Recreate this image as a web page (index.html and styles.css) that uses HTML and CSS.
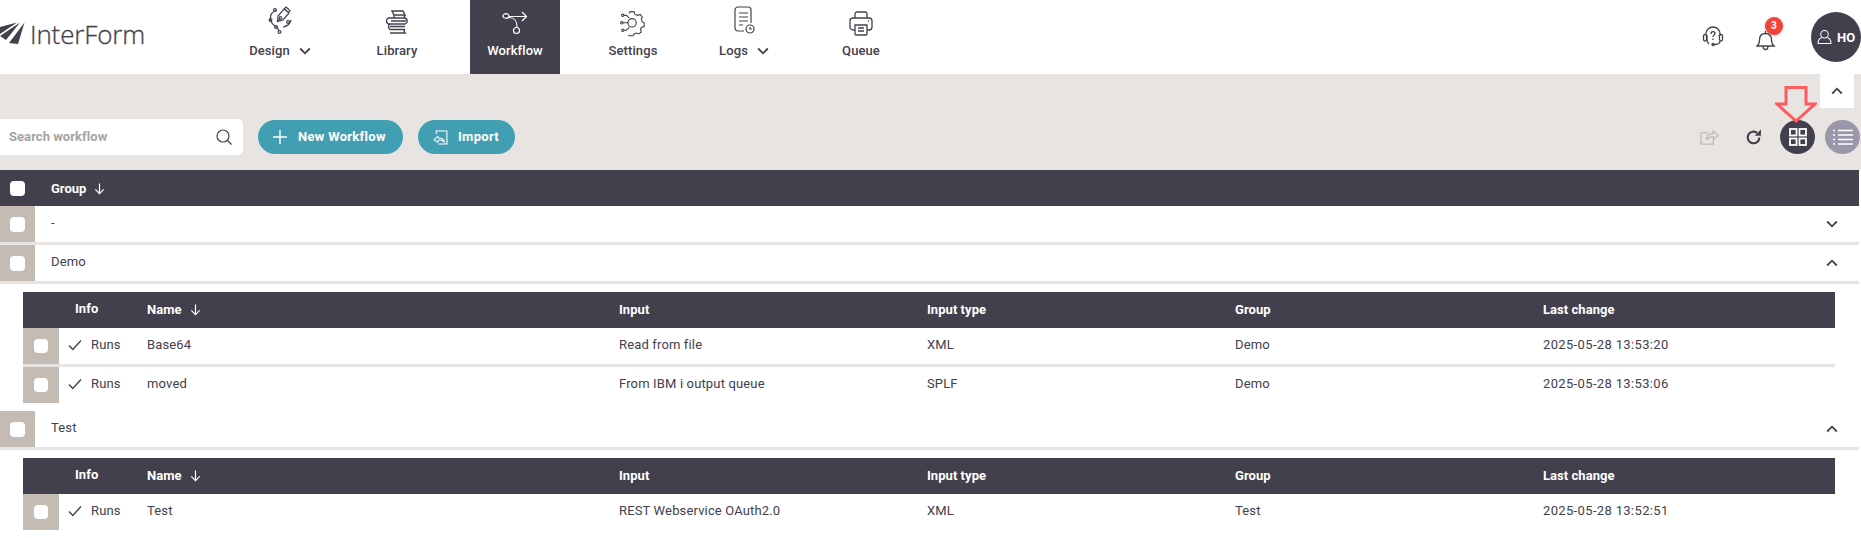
FILE: index.html
```html
<!DOCTYPE html>
<html lang="en">
<head>
<meta charset="utf-8">
<title>InterForm Workflow</title>
<link rel="stylesheet" href="styles.css">
</head>
<body>
<svg class="defs" width="0" height="0" aria-hidden="true">
  <defs>
    <symbol id="sort" viewBox="0 0 14 14"><path d="M7 1.500v11M2.500 8 7 12.500 11.500 8" fill="none" stroke="currentColor" stroke-width="1.300"/></symbol>
    <symbol id="down" viewBox="0 0 12 8"><path d="M1.200 1.500 6 6.300l4.800-4.800" fill="none" stroke="currentColor" stroke-width="1.800"/></symbol>
    <symbol id="up" viewBox="0 0 12 8"><path d="M1.200 6.500 6 1.700l4.800 4.800" fill="none" stroke="currentColor" stroke-width="1.800"/></symbol>
    <symbol id="check" viewBox="0 0 14 12"><path d="M1 6.500 4.800 10.500 13 1.500" fill="none" stroke="currentColor" stroke-width="1.400"/></symbol>
  </defs>
</svg>
<header class="topbar">
  <div class="logo">
    <svg class="logo-mark" viewBox="0 0 25 22"><path d="M0 5 17 .5 0 12zM0 14 20 .5 6 18zM9 21 24.500 .5 18 22z" fill="#43404e"/></svg>
    <span class="logo-text">InterForm</span>
  </div>
  <nav class="nav">
    <a class="nav-item w-design">
      <svg class="nav-icon" viewBox="0 0 26 28" fill="none" stroke="currentColor" stroke-width="1.200"><path d="m17 3 5 4-6 7-5.500 1.500L11 10zM19 1l4 3.500-1.500 2-4-3.500z"/><circle cx="13.500" cy="12" r="1.300"/><path d="M10.500 15.500 13 12.500M9 4.500C5 6 3 9 3.500 13c.3 3 2.500 6 6 7.500M24 14c-1 4-4 6.500-8 7M12 25l-2-4"/><circle cx="8" cy="4" r="1.400"/><circle cx="3.500" cy="14" r="1.400"/><circle cx="9" cy="21" r="1.400"/><circle cx="12.500" cy="26" r="1.400"/><circle cx="21" cy="16" r="1.400"/></svg>
      <span class="nav-label">Design<svg class="chev" viewBox="0 0 12 8"><use href="#down"/></svg></span>
    </a>
    <a class="nav-item w-library">
      <svg class="nav-icon" viewBox="0 -4 26 28" fill="none" stroke="currentColor" stroke-width="1.400"><path d="M8 1h11l2 4H10zM10 5v3h10l1-3M4 8h17c3 1 3 5 0 6H4M4 8C2 9.500 2 12.500 4 14M6 14c-2 1.500-2 4 0 5.500h15M6 16.500h15M21 19.500c-1 .5-1 2.500 0 3.500H6M7 11h15"/></svg>
      <span class="nav-label">Library</span>
    </a>
    <a class="nav-item w-workflow active">
      <svg class="nav-icon" viewBox="0 -4.500 26 28" fill="none" stroke="currentColor" stroke-width="1.200"><ellipse cx="4" cy="5.500" rx="3" ry="2.300"/><path d="M7 6h17M20 1.500 24.500 6 20 10.500M7 7c6 0 8 3 8 10"/><circle cx="14.500" cy="20" r="3"/></svg>
      <span class="nav-label">Workflow</span>
    </a>
    <a class="nav-item w-settings">
      <svg class="nav-icon" viewBox="0 -3 28 28" fill="none" stroke="currentColor" stroke-width="1.200"><circle cx="13" cy="14" r="4.500"/><path d="M4 6h3l3 3M3 14h6M4 22h3l3-3M10 4l1-2h4l1 3 3 1 3-1 2 3-1 2 1 3 2 1v4l-3 1-1 2 1 3-3 2-2-1-3 1-1 2h-4l-1-1"/><circle cx="3" cy="6" r="1.300"/><circle cx="2" cy="14" r="1.300"/><circle cx="3" cy="22" r="1.300"/></svg>
      <span class="nav-label">Settings</span>
    </a>
    <a class="nav-item w-logs">
      <svg class="nav-icon" viewBox="0 0 22 28" fill="none" stroke="currentColor" stroke-width="1.200"><path d="M11 25H5a3 3 0 0 1-3-3V4a3 3 0 0 1 3-3h10a3 3 0 0 1 3 3v13"/><path d="M6 7h9M6 11h9M6 15h9M6 19h4"/><circle cx="17" cy="23" r="4"/><path d="M17 21v2h2"/></svg>
      <span class="nav-label">Logs<svg class="chev" viewBox="0 0 12 8"><use href="#down"/></svg></span>
    </a>
    <a class="nav-item w-queue">
      <svg class="nav-icon" viewBox="0 -4 26 28" fill="none" stroke="currentColor" stroke-width="1.300"><path d="M7 8V4a2 2 0 0 1 2-2h8a2 2 0 0 1 2 2v4M7 20H5a3 3 0 0 1-3-3v-6a3 3 0 0 1 3-3h16a3 3 0 0 1 3 3v6a3 3 0 0 1-3 3h-2"/><path d="M7 15h12v9a1 1 0 0 1-1 1H8a1 1 0 0 1-1-1zM10 18h6M10 21h6M20 11h1"/></svg>
      <span class="nav-label">Queue</span>
    </a>
  </nav>
  <div class="top-actions">
    <svg class="help" viewBox="0 0 22 22" fill="none" stroke="#43404e" stroke-width="1.300"><path d="M4 9V8a7 7 0 0 1 14 0v1M18 15c0 2-2 3.500-6 3.500"/><rect x="1.500" y="8.500" width="3" height="6.500" rx="1.500"/><rect x="17.500" y="8.500" width="3" height="6.500" rx="1.500"/><path d="M5 9v5c0 2 1 3 2 4M17 9v1M9 8c0-3 4-3 4-.5 0 1.500-2 1.500-2 3.500M11 12.500v1.500"/><circle cx="11" cy="18.500" r="1"/></svg>
    <div class="bell-wrap">
      <svg class="bell" viewBox="0 0 20 22" fill="none" stroke="#43404e" stroke-width="1.300"><path d="M1 17h17c-2-1.500-2.500-3-2.500-6 0-4-2-6.500-6-6.500s-6 2.500-6 6.500c0 3-.5 4.500-2.500 6zM7 17.500c0 4 5 4 5 0M9.500 4.500V2"/></svg>
      <span class="badge">3</span>
    </div>
    <div class="avatar">
      <svg class="avatar-icon" viewBox="0 0 16 16" fill="none" stroke="#fff" stroke-width="1.100"><circle cx="8" cy="5" r="4"/><path d="M5 8.500C2.500 9.500 1 12 1 15h14c0-3-1.500-5.500-4-6.500"/></svg>
      <span>HO</span>
    </div>
  </div>
</header>

<main class="main">
  <div class="collapse-row">
    <button class="collapse"><svg class="chev-lg" viewBox="0 0 12 8"><use href="#up"/></svg></button>
  </div>
  <div class="toolbar">
    <div class="search">
      <span class="search-text">Search workflow</span>
      <svg class="search-icon" viewBox="0 0 16 16" fill="none" stroke="#43404e" stroke-width="1.200"><circle cx="7" cy="7" r="6"/><path d="m11.500 11.500 4 4"/></svg>
    </div>
    <button class="btn btn-new">
      <svg class="plus" viewBox="0 0 14 14" fill="none" stroke="#fff" stroke-width="1.400"><path d="M7 0v14M0 7h14"/></svg>New Workflow
    </button>
    <button class="btn btn-import">
      <svg class="import-icon" viewBox="0 0 14 14" fill="none" stroke="#fff" stroke-width="1"><path d="M3 4V1h10v12H5M1 9l3.500-3 .5 1.500c3 0 5 1 5.500 3.500-1.500-1.500-3-2-5.500-1.500l-.5 2z"/></svg>Import
    </button>
    <div class="tool-icons">
      <svg class="share" viewBox="0 0 20 18" fill="none" stroke="#bdb9b7" stroke-width="1.300"><path d="M14 11v5H1V4h8M7 11c0-4 3-6 7-6V2l5 5-5 4V8c-3 0-5 1-7 3z"/></svg>
      <svg class="refresh" viewBox="0 0 16 16" fill="none" stroke="#43404e" stroke-width="2"><path d="M13.500 8a5.500 5.500 0 1 1-2-4.300"/><path d="M15 .5v5.800H9.200z" fill="#43404e" stroke="none"/></svg>
      <button class="round round-dark">
        <svg class="grid-icon" viewBox="0 0 18 18" fill="none" stroke="#fff" stroke-width="1.800"><rect x="1" y="1" width="6.500" height="6.500"/><rect x="10.500" y="1" width="6.500" height="6.500"/><rect x="1" y="10.500" width="6.500" height="6.500"/><rect x="10.500" y="10.500" width="6.500" height="6.500"/></svg>
      </button>
      <button class="round round-muted">
        <svg class="list-icon" viewBox="0 0 22 16" fill="none" stroke="#fff" stroke-width="1.600"><path d="M6 1.500h15M6 6h15M6 10.500h15M6 15h15M1 1.500h2M1 6h2M1 10.500h2M1 15h2"/></svg>
      </button>
    </div>
    <svg class="annot" viewBox="0 0 42 37" fill="none" stroke="#ff5a60" stroke-width="3"><path d="M11 1.500h20V18h9L21 35 2 18h9z"/></svg>
  </div>

  <section class="groups">
    <div class="group-head">
      <span class="cb-cell dark"><span class="cb"></span></span>
      <span class="group-title">Group<svg class="sort" viewBox="0 0 14 14"><use href="#sort"/></svg></span>
    </div>

    <div class="group-row">
      <span class="cb-cell"><span class="cb"></span></span>
      <span class="group-name">-</span>
      <svg class="chev-sm" viewBox="0 0 12 8"><use href="#down"/></svg>
    </div>
    <div class="group-row">
      <span class="cb-cell"><span class="cb"></span></span>
      <span class="group-name">Demo</span>
      <svg class="chev-sm" viewBox="0 0 12 8"><use href="#up"/></svg>
    </div>

    <div class="panel">
      <div class="sub-row sub-head">
        <span></span>
        <span class="info-head">Info</span>
        <span>Name<svg class="sort" viewBox="0 0 14 14"><use href="#sort"/></svg></span>
        <span>Input</span><span>Input type</span><span>Group</span><span>Last change</span>
      </div>
      <div class="sub-row">
        <span class="cb-cell"><span class="cb"></span></span>
        <span class="runs"><svg class="check" viewBox="0 0 14 12"><use href="#check"/></svg>Runs</span>
        <span>Base64</span><span>Read from file</span><span>XML</span><span>Demo</span><span class="date">2025-05-28 13:53:20</span>
      </div>
      <div class="sub-row">
        <span class="cb-cell"><span class="cb"></span></span>
        <span class="runs"><svg class="check" viewBox="0 0 14 12"><use href="#check"/></svg>Runs</span>
        <span>moved</span><span>From IBM i output queue</span><span>SPLF</span><span>Demo</span><span class="date">2025-05-28 13:53:06</span>
      </div>
    </div>

    <div class="group-row">
      <span class="cb-cell"><span class="cb"></span></span>
      <span class="group-name">Test</span>
      <svg class="chev-sm" viewBox="0 0 12 8"><use href="#up"/></svg>
    </div>

    <div class="panel">
      <div class="sub-row sub-head">
        <span></span>
        <span class="info-head">Info</span>
        <span>Name<svg class="sort" viewBox="0 0 14 14"><use href="#sort"/></svg></span>
        <span>Input</span><span>Input type</span><span>Group</span><span>Last change</span>
      </div>
      <div class="sub-row">
        <span class="cb-cell"><span class="cb"></span></span>
        <span class="runs"><svg class="check" viewBox="0 0 14 12"><use href="#check"/></svg>Runs</span>
        <span>Test</span><span>REST Webservice OAuth2.0</span><span>XML</span><span>Test</span><span class="date">2025-05-28 13:52:51</span>
      </div>
    </div>
  </section>
</main>
</body>
</html>
```
FILE: styles.css
```css
* { box-sizing: border-box; }
html, body { margin: 0; height: 100%; overflow: hidden; background: #fff; }
body { font-family: Roboto, "Liberation Sans", sans-serif; font-size: 13px; letter-spacing: .15px; color: #43404e; }
.defs { position: absolute; }
button { border: 0; padding: 0; font: inherit; letter-spacing: inherit; }

.topbar { height: 74px; display: flex; background: #fff; position: relative; }
.logo { width: 200px; display: flex; align-items: center; }
.logo-mark { width: 25px; height: 22px; margin-top: -8px; flex: none; }
.logo-text { font-family: "Open Sans", sans-serif; font-weight: 300; font-size: 26px; letter-spacing: -.15px; margin-left: 5px; margin-top: -6px; color: #43404e; -webkit-text-stroke: .3px #43404e; }
.nav { display: flex; }
.nav-item { display: flex; flex-direction: column; align-items: center; height: 74px; padding-top: 6px; color: #43404e; }
.w-design { width: 160px; }
.w-library { width: 74px; }
.w-workflow { width: 90px; margin-left: 36px; }
.w-settings { width: 146px; }
.w-logs { width: 76px; }
.w-queue { width: 158px; }
.active { background: #43404e; color: #fff; }
.nav-icon { width: 26px; height: 28px; flex: none; overflow: visible; }
.nav-label { display: flex; align-items: center; height: 16px; margin-top: 9px; font-weight: 500; font-size: 13px; line-height: 16px; letter-spacing: .1px; }
.chev { width: 12px; height: 8px; margin-left: 9px; }
.top-actions { margin-left: auto; display: flex; align-items: center; }
.help { width: 22px; height: 22px; margin-right: 32px; margin-top: -1px; }
.bell-wrap { width: 24px; height: 30px; position: relative; margin-right: 31px; }
.bell { width: 20px; height: 22px; position: absolute; left: 0; top: 7px; }
.badge { position: absolute; left: 9px; top: -5px; width: 18px; height: 18px; border-radius: 50%; background: #f44336; color: #fff; font-size: 10px; font-weight: 700; line-height: 18px; text-align: center; box-shadow: 0 1px 3px rgba(0,0,0,.25); }
.avatar { width: 50px; height: 50px; border-radius: 50%; background: #43404e; color: #fff; display: flex; align-items: center; padding-left: 6px; font-size: 13px; font-weight: 700; letter-spacing: 0; }
.avatar-icon { width: 15px; height: 16px; margin-right: 5px; }

.main { background: #e8e4e1; height: 464px; position: relative; }
.collapse-row { height: 34px; display: flex; justify-content: flex-end; padding-right: 7px; }
.collapse { width: 34px; height: 34px; background: #fff; display: flex; align-items: center; justify-content: center; color: #43404e; }
.chev-lg { width: 12px; height: 8px; }
.toolbar { height: 62px; padding-top: 11px; display: flex; align-items: flex-start; position: relative; }
.search { width: 243px; height: 36px; background: #fff; border-radius: 0 5px 5px 0; display: flex; align-items: center; justify-content: space-between; padding: 0 11px 0 9px; }
.search-text { color: #a6a3a3; font-size: 13px; font-weight: 700; letter-spacing: .05px; margin-top: -2px; }
.search-icon { width: 16px; height: 16px; }
.btn { height: 34px; margin-top: 1px; padding-bottom: 2px; border-radius: 17px; background: #429fb3; color: #fff; font-weight: 700; font-size: 13px; letter-spacing: .3px; display: flex; align-items: center; }
.btn-new { width: 145px; margin-left: 15px; padding-left: 15px; }
.plus { width: 14px; height: 14px; margin-right: 11px; margin-top: 2px; }
.btn-import { width: 97px; margin-left: 15px; padding-left: 15px; }
.import-icon { width: 15px; height: 15px; margin-right: 10px; margin-top: 2px; }
.tool-icons { margin-left: auto; display: flex; align-items: center; height: 34px; margin-top: 1px; }
.share { width: 19px; height: 17px; margin-right: 26px; }
.refresh { width: 17px; height: 17px; margin-right: 18px; }
.round { width: 35px; height: 34px; border-radius: 50%; display: flex; align-items: center; justify-content: center; }
.round-dark { background: #43404e; margin-right: 10px; }
.round-muted { background: #9a97ab; margin-right: 1px; }
.grid-icon { width: 18px; height: 18px; }
.list-icon { width: 22px; height: 16px; }
.annot { position: absolute; right: 44px; top: -22px; width: 42px; height: 37px; }

.groups { background: #fff; width: 1861px; height: 368px; padding-right: 2px; }
.group-head { height: 36px; background: #43404e; color: #fff; display: flex; align-items: center; font-weight: 700; font-size: 13px; letter-spacing: 0; }
.cb-cell { width: 35px; height: 36px; background: #c3bbb4; display: flex; align-items: center; justify-content: center; flex: none; }
.cb-cell.dark { background: transparent; }
.cb { width: 15px; height: 15px; border-radius: 4px; background: #fff; display: block; }
.group-title { display: flex; align-items: center; margin-left: 16px; }
.sort { width: 13px; height: 13px; margin-left: 7px; }
.group-row { height: 39px; display: flex; align-items: flex-start; border-bottom: 3px solid #e8e4e1; padding-right: 21px; }
.group-name { margin-left: 16px; line-height: 33px; flex: 1; }
.chev-sm { width: 12px; height: 8px; margin-top: 14px; }
.panel { padding: 8px 24px 8px 23px; }
.sub-row { display: grid; grid-template-columns: 36px 88px 472px 308px 308px 308px 292px; grid-template-rows: 33px; height: 36px; align-items: center; }
.sub-row:not(.sub-head):not(:last-child) { height: 39px; border-bottom: 3px solid #e8e4e1; }
.sub-row .cb-cell { width: 36px; align-self: start; }
.sub-row .cb { width: 14px; height: 14px; }
.sub-row.sub-head { background: #43404e; color: #fff; font-weight: 700; font-size: 13px; letter-spacing: .05px; grid-template-rows: 35px; }
.sub-head span { display: flex; align-items: center; }
.info-head { padding-left: 16px; margin-top: -2px; }
.runs { display: flex; align-items: center; padding-left: 9px; }
.check { width: 14px; height: 12px; margin-right: 9px; }
.date { letter-spacing: .35px; }
```
